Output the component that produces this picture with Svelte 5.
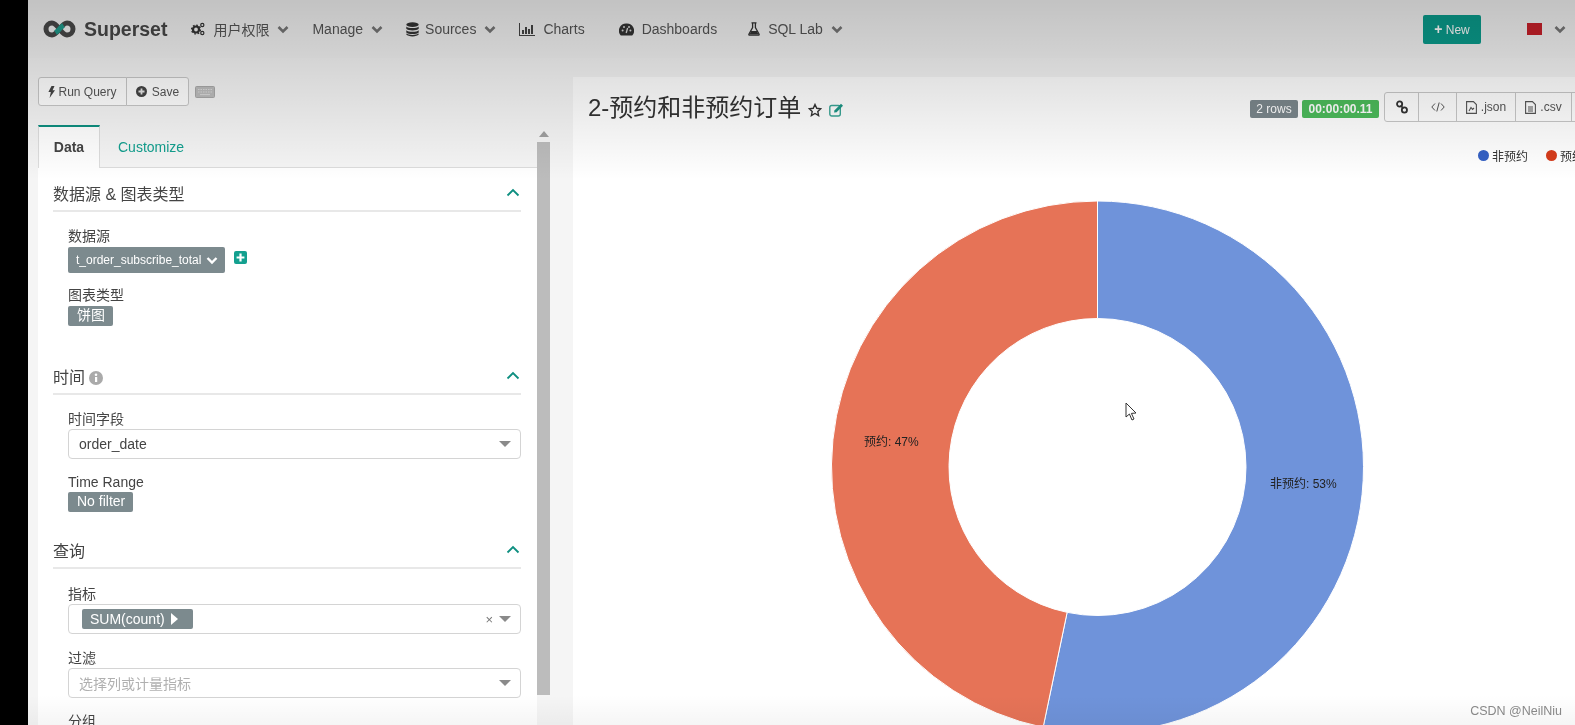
<script>
  const R = 266;
  const r = 148.5;
  const cx = 524.5;
  const cy = 295;

  function arc(from, to) {
    const a0 = (from * Math.PI) / 180;
    const a1 = (to * Math.PI) / 180;
    const large = to - from > 180 ? 1 : 0;
    const pt = (rad, a) => `${cx + rad * Math.sin(a)} ${cy - rad * Math.cos(a)}`;
    return `M${pt(R, a0)} A${R} ${R} 0 ${large} 1 ${pt(R, a1)} L${pt(r, a1)} A${r} ${r} 0 ${large} 0 ${pt(r, a0)} Z`;
  }

  const split = 191.8;
  const slices = [
    { d: arc(0, split), color: "#6f93da" },
    { d: arc(split, 360), color: "#e67357" },
  ];
</script>

{#snippet chev()}
  <svg class="chev" width="12" height="9" viewBox="0 0 12 9"><path d="M1.5 2 L6 6.5 L10.5 2" /></svg>
{/snippet}

{#snippet caret()}
  <svg class="caret" width="12" height="6" viewBox="0 0 12 6"><path d="M0 0 H12 L6 6 Z" /></svg>
{/snippet}

{#snippet sectionUp()}
  <svg class="up" width="14" height="9" viewBox="0 0 14 9"><path d="M1.5 7.5 L7 2 L12.5 7.5" /></svg>
{/snippet}

<div class="page">
  <div class="strip"></div>
  <div class="content">
    <nav>
      <svg class="logo" width="33" height="18" viewBox="0 0 32 18">
        <path d="M16 9 C13 5 11 3 8.5 3 A6 6 0 0 0 8.5 15 C11 15 13 13 16 9 C19 5 21 3 23.5 3 A6 6 0 0 1 23.5 15 C21 15 19 13 16 9" fill="none" stroke="#484848" stroke-width="5" />
        <path d="M12 12.7 C14 11.5 15 10.3 16 9 C17 7.7 18 6.5 20 5.3" fill="none" stroke="#1f9c8c" stroke-width="5" />
      </svg>
      <span class="brand">Superset</span>
      <div class="menu">
        <a class="nav-item">
          <svg width="14" height="14" viewBox="0 0 14 14">
            <circle cx="5" cy="7.5" r="3" fill="none" stroke="#333" stroke-width="2.2" />
            <circle cx="5" cy="7.5" r="4.4" fill="none" stroke="#333" stroke-width="1.4" stroke-dasharray="1.7 1.7" />
            <circle cx="11.3" cy="3" r="1.6" fill="none" stroke="#333" stroke-width="1.2" />
            <circle cx="11.3" cy="11" r="1.6" fill="none" stroke="#333" stroke-width="1.2" />
          </svg>
          用户权限 {@render chev()}
        </a>
        <a class="nav-item">Manage {@render chev()}</a>
        <a class="nav-item tight">
          <svg width="13" height="15" viewBox="0 0 13 15" fill="#333">
            <ellipse cx="6.5" cy="2.6" rx="6.2" ry="2.3" />
            <path d="M.3 4.4 C2 6.4 11 6.4 12.7 4.4 V6.8 C11 9 2 9 .3 6.8 Z" />
            <path d="M.3 8.2 C2 10.2 11 10.2 12.7 8.2 V10.4 C11 12.6 2 12.6 .3 10.4 Z" />
            <path d="M.3 11.6 C2 13.4 11 13.4 12.7 11.6 V12.6 C11 15 2 15 .3 12.6 Z" />
          </svg>
          Sources {@render chev()}
        </a>
        <a class="nav-item plain wide-gap">
          <svg width="16" height="13" viewBox="0 0 16 13" fill="#444">
            <path d="M0 0 H1 V12 H16 V13 H0 Z" />
            <rect x="3" y="7" width="2" height="4" />
            <rect x="6" y="4" width="2" height="7" />
            <rect x="9" y="6" width="2" height="5" />
            <rect x="12" y="2" width="2" height="9" />
          </svg>
          Charts
        </a>
        <a class="nav-item plain">
          <svg width="15" height="13" viewBox="0 0 15 13">
            <path d="M7.5 .5 A7.2 7.2 0 0 0 1.8 12.5 H13.2 A7.2 7.2 0 0 0 7.5 .5 Z" fill="#333" />
            <circle cx="3.6" cy="7.4" r="1" fill="#ddd" />
            <circle cx="5" cy="3.9" r="1" fill="#ddd" />
            <circle cx="10" cy="3.9" r="1" fill="#ddd" />
            <circle cx="11.4" cy="7.4" r="1" fill="#ddd" />
            <path d="M7.2 10 L8.6 5" stroke="#ddd" stroke-width="1.3" />
          </svg>
          Dashboards
        </a>
        <a class="nav-item">
          <svg width="12" height="14" viewBox="0 0 12 14">
            <path d="M3.5 .8 H8.5 M4.6 1 V5.6 L.9 12.2 Q.6 13.2 1.6 13.2 H10.4 Q11.4 13.2 11.1 12.2 L7.4 5.6 V1" fill="none" stroke="#333" stroke-width="1.3" />
            <path d="M3.2 9 H8.8 L10.6 12.6 H1.4 Z" fill="#333" />
          </svg>
          SQL Lab {@render chev()}
        </a>
      </div>
      <button class="new-btn"><b>+</b> New</button>
      <span class="flag"></span>
      {@render chev()}
    </nav>

    <main>
      <section class="side">
        <div class="toolbar">
          <div class="btn-group">
            <button class="run">
              <svg width="7" height="12" viewBox="0 0 7 12" fill="#444"><path d="M3.5 0 H6.5 L4.6 4.2 H7 L1.6 12 L2.8 6 H.4 Z" /></svg>
              Run Query
            </button>
            <button class="save">
              <svg width="11" height="11" viewBox="0 0 11 11"><circle cx="5.5" cy="5.5" r="5.5" fill="#444" /><path d="M5.5 2.5 V8.5 M2.5 5.5 H8.5" stroke="#e6e6e6" stroke-width="1.8" /></svg>
              Save
            </button>
          </div>
          <svg class="kbd" width="20" height="12" viewBox="0 0 20 12">
            <rect x=".5" y=".5" width="19" height="11" rx="1" fill="#bdbdbd" stroke="#a9a9a9" />
            <path d="M3 3.5 H17 M3 6 H17" stroke="#dcdcdc" stroke-dasharray="1.5 1" />
            <path d="M5 8.6 H15" stroke="#dcdcdc" />
          </svg>
        </div>

        <div class="side-body">
          <div class="panel">
            <div class="tabs">
              <div class="tab active">Data</div>
              <div class="tab">Customize</div>
            </div>
            <div class="form">
              <div class="section-head">
                <span>数据源 &amp; 图表类型</span>
                {@render sectionUp()}
              </div>
              <div class="fields first-group">
                <label>数据源</label>
                <div class="ds-row">
                  <div class="ds-select">t_order_subscribe_total
                    <svg width="12" height="9" viewBox="0 0 12 9"><path d="M1.5 2 L6 6.5 L10.5 2" fill="none" stroke="#fff" stroke-width="2.4" /></svg>
                  </div>
                  <svg class="ds-add" width="13" height="13" viewBox="0 0 13 13">
                    <rect width="13" height="13" rx="2" fill="#13a08f" />
                    <path d="M6.5 2.6 V10.4 M2.6 6.5 H10.4" stroke="#fff" stroke-width="2.2" />
                  </svg>
                </div>
                <label class="next">图表类型</label>
                <span class="tag first">饼图</span>
              </div>

              <div class="section-head spaced">
                <span>时间
                  <svg class="info" width="14" height="14" viewBox="0 0 14 14">
                    <circle cx="7" cy="7" r="7" fill="#aaa" />
                    <rect x="6" y="6" width="2.2" height="5" fill="#fff" />
                    <circle cx="7" cy="3.8" r="1.3" fill="#fff" />
                  </svg>
                </span>
                {@render sectionUp()}
              </div>
              <div class="fields time-group">
                <label>时间字段</label>
                <div class="select"><span>order_date</span>{@render caret()}</div>
                <label class="next wide">Time Range</label>
                <span class="tag">No filter</span>
              </div>

              <div class="section-head close">
                <span>查询</span>
                {@render sectionUp()}
              </div>
              <div class="fields last-group">
                <label>指标</label>
                <div class="select multi">
                  <span class="metric">SUM(count)
                    <svg width="7" height="12" viewBox="0 0 7 12" fill="#fff"><path d="M0 0 L7 6 L0 12 Z" /></svg>
                  </span>
                  <span class="clear">×</span>
                  {@render caret()}
                </div>
                <label class="next filter">过滤</label>
                <div class="select"><span class="ph">选择列或计量指标</span>{@render caret()}</div>
                <label class="next wide">分组</label>
              </div>
            </div>
          </div>
          <div class="scrollbar">
            <svg width="10" height="6" viewBox="0 0 10 6" fill="#a0a0a0"><path d="M5 0 L10 6 H0 Z" /></svg>
            <div class="thumb"></div>
          </div>
        </div>
      </section>

      <section class="chart">
        <header>
          <h1>2-预约和非预约订单</h1>
          <svg class="star" width="14" height="14" viewBox="0 0 24 24"><path d="M12 2.5 L15 9 L22 9.8 L16.8 14.6 L18.2 21.5 L12 18 L5.8 21.5 L7.2 14.6 L2 9.8 L9 9 Z" fill="none" stroke="#333" stroke-width="2.4" /></svg>
          <svg class="edit" width="15" height="14" viewBox="0 0 15 14">
            <rect x=".8" y="2.5" width="10.5" height="10.5" rx="2" fill="none" stroke="#3aa596" stroke-width="1.4" />
            <path d="M5 9.6 L5.6 7.2 L12 .8 L14 2.8 L7.6 9.2 Z" fill="#1d9686" />
          </svg>
          <div class="meta">
            <span class="badge grey">2 rows</span>
            <span class="badge green">00:00:00.11</span>
            <div class="actions">
              <div class="act" style="width:34px">
                <svg width="12" height="14" viewBox="0 0 12 14" fill="none" stroke="#333" stroke-width="1.8"><circle cx="3.6" cy="4" r="2.6" /><circle cx="8.4" cy="10" r="2.6" /><path d="M4.6 5.5 L7.4 8.5" /></svg>
              </div>
              <div class="act" style="width:38px">
                <svg width="14" height="10" viewBox="0 0 14 10" fill="none" stroke="#555" stroke-width="1"><path d="M4 1.5 L.8 5 L4 8.5 M10 1.5 L13.2 5 L10 8.5 M8.2 .5 L5.8 9.5" /></svg>
              </div>
              <div class="act" style="width:59px">
                <svg width="11" height="13" viewBox="0 0 11 13" fill="none" stroke="#555" stroke-width="1.1"><path d="M.6 .6 H7.4 L10.4 3.6 V12.4 H.6 Z" /><path d="M3 10 L5 6.5 L6.5 8.5 L8 7" /></svg>
                .json
              </div>
              <div class="act" style="width:56px">
                <svg width="11" height="13" viewBox="0 0 11 13" fill="none" stroke="#555" stroke-width="1.1"><path d="M.6 .6 H7.4 L10.4 3.6 V12.4 H.6 Z" /><path d="M3 6 H8 M3 8 H8 M3 10 H8" /></svg>
                .csv
              </div>
              <div class="act" style="width:44px"></div>
            </div>
          </div>
        </header>

        <div class="legend">
          <i style="background:#3561c4"></i><span>非预约</span>
          <i class="second" style="background:#d63c1c"></i><span>预约</span>
        </div>

        <svg class="donut" width="1002" height="553" viewBox="0 0 1002 553">
          {#each slices as s}
            <path d={s.d} fill={s.color} stroke="#fff" stroke-width="1" />
          {/each}
          <text x="697" y="316">非预约: 53%</text>
          <text x="291" y="274">预约: 47%</text>
          <path d="M553 231 V245 L556.4 242 L559 248 L561 247 L558.4 241.4 L563 241 Z" fill="#fff" stroke="#333" stroke-width="1" />
        </svg>
      </section>
    </main>

    <div class="shade-top"></div>
    <div class="shade-bottom"></div>
    <span class="mark">CSDN @NeilNiu</span>
  </div>
</div>

<style>
  :global(body) {
    margin: 0;
    background: #000;
  }

  .page {
    display: flex;
    width: 1575px;
    height: 725px;
    overflow: hidden;
    background: #000;
    font-family: "Liberation Sans", "Noto Sans CJK SC", sans-serif;
    color: #333;
    filter: blur(0.35px);
  }

  .strip {
    width: 28px;
    flex: none;
  }

  .content {
    position: relative;
    flex: 1;
    min-width: 0;
    display: flex;
    flex-direction: column;
    background: #f5f5f5;
    overflow: hidden;
  }

  nav {
    height: 58px;
    flex: none;
    display: flex;
    align-items: center;
    padding-left: 15px;
    background: #f3f3f3;
  }

  .logo {
    flex: none;
  }

  .brand {
    margin-left: 8px;
    font-size: 19.5px;
    font-weight: 700;
    color: #484848;
  }

  .menu {
    display: flex;
    align-items: center;
    gap: 23px;
    margin-left: 24px;
  }

  .nav-item {
    display: flex;
    align-items: center;
    gap: 8px;
    font-size: 14px;
    color: #555;
  }

  .nav-item.tight {
    gap: 6px;
  }

  .nav-item.tight .chev {
    margin-left: 2px;
  }

  .nav-item.plain {
    padding-right: 8px;
  }

  .nav-item.wide-gap {
    padding-right: 11px;
  }

  .chev {
    flex: none;
  }

  .chev path {
    fill: none;
    stroke: #777;
    stroke-width: 2.6;
  }

  .new-btn {
    margin-left: auto;
    width: 58px;
    height: 29px;
    padding: 0;
    border: none;
    border-radius: 2px;
    background: #0a9c8c;
    color: #fff;
    font: 12px "Liberation Sans", sans-serif;
  }

  .new-btn b {
    font-size: 14px;
  }

  .flag {
    width: 15px;
    height: 12px;
    margin-left: 46px;
    margin-right: 12px;
    background: #c8202a;
  }

  nav > .chev {
    margin-right: 9px;
  }

  main {
    flex: 1;
    min-height: 0;
    display: flex;
  }

  .side {
    width: 512px;
    flex: none;
    margin-left: 10px;
    padding-top: 19px;
  }

  .toolbar {
    height: 29px;
    display: flex;
    align-items: center;
    gap: 6px;
    margin-bottom: 19px;
  }

  .btn-group {
    display: flex;
    height: 29px;
  }

  .btn-group button {
    display: flex;
    align-items: center;
    justify-content: center;
    gap: 3px;
    padding: 0;
    background: #fff;
    border: 1px solid #c8c8c8;
    color: #555;
    font: 12px "Liberation Sans", sans-serif;
  }

  .run {
    width: 89px;
    border-radius: 3px 0 0 3px;
  }

  .save {
    width: 63px;
    margin-left: -1px;
    border-radius: 0 3px 3px 0;
    gap: 5px !important;
  }

  .side-body {
    display: flex;
    height: 600px;
  }

  .panel {
    width: 499px;
    flex: none;
  }

  .tabs {
    display: flex;
    height: 43px;
    border-bottom: 1px solid #dcdcdc;
    box-sizing: border-box;
  }

  .tab {
    padding: 0 18px;
    font-size: 14px;
    line-height: 45px;
    color: #13a08f;
  }

  .tab.active {
    width: 62px;
    box-sizing: border-box;
    padding: 0;
    text-align: center;
    font-weight: 700;
    line-height: 41px;
    color: #444;
    background: #fff;
    border-top: 2px solid #0e8f80;
    border-left: 1px solid #ddd;
    border-right: 1px solid #ddd;
    height: 43px;
  }

  .form {
    background: #fff;
    height: 557px;
    padding: 0 16px 0 15px;
    overflow: hidden;
  }

  .section-head {
    display: flex;
    align-items: center;
    justify-content: space-between;
    height: 44px;
    box-sizing: border-box;
    padding: 15px 0 3px;
    border-bottom: 2px solid #e8e8e8;
    font-size: 16px;
    line-height: 24px;
    color: #444;
  }

  .section-head span {
    display: flex;
    align-items: center;
    gap: 4px;
  }

  .section-head.spaced {
    margin-top: 25px;
  }

  .section-head.close {
    margin-top: 13px;
  }

  .up {
    margin: 0 1px 6px 0;
  }

  .up path {
    fill: none;
    stroke: #0e8f80;
    stroke-width: 1.8;
  }

  .fields {
    padding: 14px 0 0 15px;
  }

  .fields.time-group {
    padding-top: 15px;
  }

  .fields.last-group {
    padding-top: 16px;
  }

  label {
    display: block;
    height: 19px;
    font-size: 14px;
    line-height: 19px;
    color: #444;
  }

  .first-group label {
    line-height: 21px;
  }

  label.next {
    margin-top: 12px;
  }

  label.wide {
    margin-top: 14px;
  }

  label.filter {
    margin-top: 15px;
  }

  .ds-row {
    display: flex;
    align-items: flex-start;
    margin-top: 2px;
  }

  .ds-select {
    width: 157px;
    height: 26px;
    box-sizing: border-box;
    display: flex;
    align-items: center;
    justify-content: space-between;
    padding: 0 7px 0 8px;
    background: #7c8a8e;
    border-radius: 2px;
    color: #fff;
    font-size: 12px;
  }

  .ds-add {
    margin: 4px 0 0 9px;
  }

  .tag {
    display: inline-block;
    padding: 0 8px 0 9px;
    height: 20px;
    line-height: 19px;
    border-radius: 2px;
    background: #7c8a8e;
    color: #fff;
    font-size: 14px;
  }

  .tag.first {
    margin-top: 2px;
  }

  .select {
    display: flex;
    align-items: center;
    height: 30px;
    box-sizing: border-box;
    padding: 0 9px 0 10px;
    border: 1px solid #d4d4d4;
    border-radius: 4px;
    font-size: 14px;
    color: #444;
  }

  .select > span:first-child {
    flex: 1;
  }

  .select.multi {
    padding-left: 13px;
  }

  .select.multi > .metric {
    flex: none;
    display: flex;
    align-items: center;
    gap: 6px;
    width: 111px;
    height: 20px;
    box-sizing: border-box;
    padding: 0 8px;
    border-radius: 2px;
    background: #7c8a8e;
    color: #fff;
  }

  .clear {
    margin-left: auto;
    margin-right: 6px;
    font-size: 13px;
    color: #777;
  }

  .ph {
    color: #b0b0b0;
  }

  .caret {
    flex: none;
  }

  .caret path {
    fill: #8a8a8a;
  }

  .scrollbar {
    width: 13px;
    flex: none;
    display: flex;
    flex-direction: column;
    align-items: center;
    padding-top: 6px;
    box-sizing: border-box;
  }

  .thumb {
    width: 13px;
    height: 553px;
    margin-top: 5px;
    background: #bcbcbc;
  }

  .chart {
    width: 1002px;
    flex: none;
    margin: 19px 0 0 23px;
    background: #fff;
    overflow: hidden;
  }

  header {
    display: flex;
    align-items: center;
    height: 60px;
    padding-left: 15px;
  }

  h1 {
    margin: 0 0 4px;
    font-size: 24px;
    font-weight: 400;
    color: #333;
  }

  .star {
    margin: 6px 0 0 7px;
  }

  .edit {
    margin: 6px 0 0 7px;
  }

  .meta {
    display: flex;
    align-items: center;
    gap: 4px;
    margin-left: auto;
    margin-right: -42px;
  }

  .badge {
    height: 18px;
    box-sizing: border-box;
    margin-top: 3px;
    line-height: 18px;
    border-radius: 2px;
    color: #fff;
    font-size: 12px;
    text-align: center;
  }

  .grey {
    width: 48px;
    background: #7b878c;
  }

  .green {
    width: 77px;
    margin-right: 1px;
    background: #4cbb5b;
    font-weight: 700;
  }

  .actions {
    display: flex;
    height: 30px;
    box-sizing: border-box;
    border: 1px solid #c8c8c8;
    border-radius: 3px;
    background: #fff;
  }

  .act {
    display: flex;
    align-items: center;
    justify-content: center;
    gap: 4px;
    box-sizing: border-box;
    border-right: 1px solid #c8c8c8;
    font-size: 12px;
    color: #555;
  }

  .legend {
    display: flex;
    align-items: center;
    height: 37px;
    margin-left: 905px;
    font-size: 12px;
    color: #333;
    white-space: nowrap;
  }

  .legend i {
    width: 11px;
    height: 11px;
    margin-right: 3px;
    border-radius: 50%;
    flex: none;
  }

  .legend .second {
    margin-left: 18px;
  }

  .donut {
    display: block;
    margin-top: -2px;
  }

  .donut text {
    font-size: 12px;
    fill: #222;
  }

  .shade-top {
    position: absolute;
    top: 0;
    left: 0;
    right: 0;
    height: 180px;
    background: linear-gradient(to bottom, rgba(0, 0, 0, 0.2), rgba(0, 0, 0, 0));
    pointer-events: none;
  }

  .shade-bottom {
    position: absolute;
    bottom: 0;
    left: 0;
    right: 0;
    height: 30px;
    background: linear-gradient(to bottom, rgba(0, 0, 0, 0), rgba(0, 0, 0, 0.04));
    pointer-events: none;
  }

  .mark {
    position: absolute;
    right: 13px;
    bottom: 7px;
    font-size: 12.5px;
    color: #888;
  }
</style>
